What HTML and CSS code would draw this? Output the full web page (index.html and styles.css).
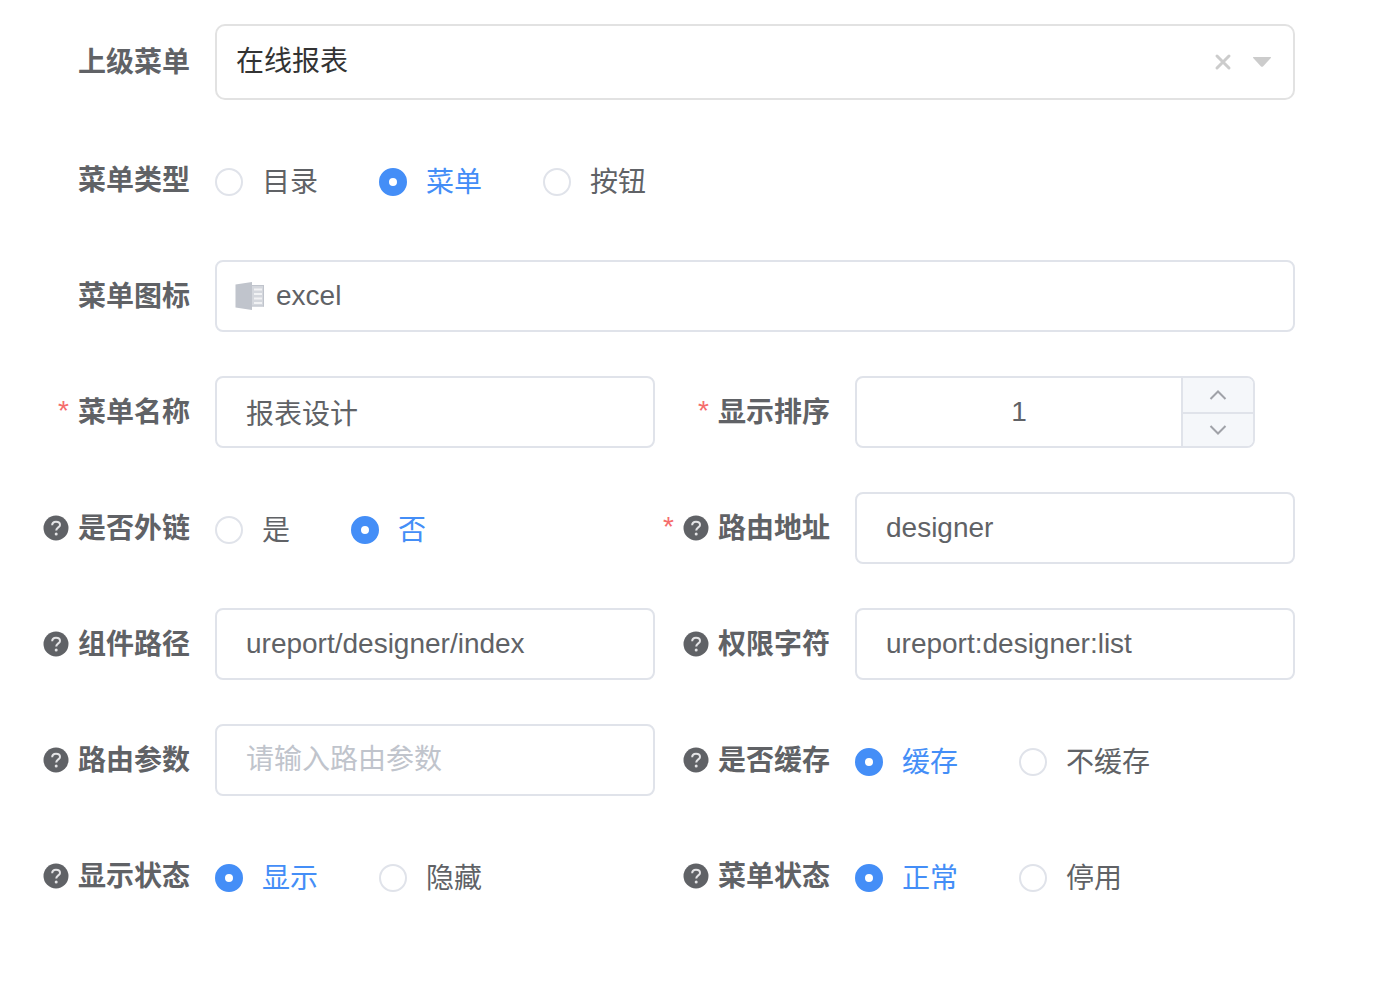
FILE: index.html
```html
<!DOCTYPE html>
<html lang="zh-CN">
<head>
<meta charset="utf-8">
<meta name="viewport" content="width=device-width, initial-scale=1">
<title>菜单设置</title>
<link rel="stylesheet" href="styles.css">
</head>
<body>
<svg class="sprite" aria-hidden="true">
  <symbol id="help" viewBox="0 0 26 26">
    <circle cx="13" cy="13" r="12.5" fill="currentColor"/>
    <path d="M9.2 10.2C9.2 7.8 10.8 6.7 13 6.7S17 7.9 17 9.9C17 12.4 13.2 12.5 13.2 15.6" fill="none" stroke="#e4e4e6" stroke-width="2"/>
    <circle cx="13.2" cy="19" r="1.5" fill="#e4e4e6"/>
  </symbol>
</svg>
<form class="form">
  <div class="item item-wide">
    <label class="label" for="parent">上级菜单</label>
    <div class="field select">
      <select class="select-input" id="parent"><option>在线报表</option></select>
      <div class="select-tools">
        <button class="clear" type="button" aria-label="清除">
          <svg width="18" height="18" viewBox="0 0 18 18"><path d="M3 3L15 15M15 3L3 15" stroke="#ccc" stroke-width="3" stroke-linecap="round"/></svg>
        </button>
        <svg width="20" height="12" viewBox="0 0 20 12" aria-hidden="true"><path d="M1.5 1H18.5Q19.5 1 18.8 2L11 10.4Q10 11.3 9 10.4L1.2 2Q.5 1 1.5 1Z" fill="#ccc"/></svg>
      </div>
    </div>
  </div>

  <div class="item item-wide">
    <span class="label" id="type-label">菜单类型</span>
    <div class="radios" role="radiogroup" aria-labelledby="type-label">
      <label class="radio"><input type="radio" name="type"><span>目录</span></label>
      <label class="radio"><input type="radio" name="type" checked><span>菜单</span></label>
      <label class="radio"><input type="radio" name="type"><span>按钮</span></label>
    </div>
  </div>

  <div class="item item-wide">
    <label class="label" for="icon">菜单图标</label>
    <div class="field field-icon">
      <svg width="30" height="30" viewBox="0 0 30 30" aria-hidden="true">
        <path d="M.5 3.5L17 1V29L.5 26.5Z" fill="#c0c4cc"/>
        <path d="M17 4H29V25.5H17Z" fill="#d4d7dd"/>
        <path d="M28.5 4V25.5M17 4.5H29M17 25H29" stroke="#c0c4cc" stroke-width="1"/>
        <path d="M19 8.5H27M19 13H27M19 17.5H27M19 22H27" stroke="#f1f2f4" stroke-width="2"/>
      </svg>
      <input class="input" id="icon" type="text" value="excel" readonly>
    </div>
  </div>

  <div class="item">
    <label class="label" for="name"><span class="required">*</span>菜单名称</label>
    <div class="field"><input class="input" id="name" type="text" value="报表设计"></div>
  </div>
  <div class="item">
    <label class="label" for="order"><span class="required">*</span>显示排序</label>
    <div class="field stepper">
      <input class="input stepper-input" id="order" type="text" inputmode="numeric" value="1">
      <div class="stepper-buttons">
        <button type="button" aria-label="增加"><svg width="18" height="12" viewBox="0 0 18 12"><path d="M1.5 10L9 2.5L16.5 10" fill="none" stroke="#a0a2a8" stroke-width="2"/></svg></button>
        <button type="button" aria-label="减少"><svg width="18" height="12" viewBox="0 0 18 12"><path d="M1.5 2L9 9.5L16.5 2" fill="none" stroke="#a0a2a8" stroke-width="2"/></svg></button>
      </div>
    </div>
  </div>

  <div class="item">
    <span class="label" id="link-label"><svg class="help"><use href="#help"/></svg>是否外链</span>
    <div class="radios" role="radiogroup" aria-labelledby="link-label">
      <label class="radio"><input type="radio" name="link"><span>是</span></label>
      <label class="radio"><input type="radio" name="link" checked><span>否</span></label>
    </div>
  </div>
  <div class="item">
    <label class="label" for="path"><span class="required">*</span><svg class="help"><use href="#help"/></svg>路由地址</label>
    <div class="field"><input class="input" id="path" type="text" value="designer"></div>
  </div>

  <div class="item">
    <label class="label" for="component"><svg class="help"><use href="#help"/></svg>组件路径</label>
    <div class="field"><input class="input" id="component" type="text" value="ureport/designer/index"></div>
  </div>
  <div class="item">
    <label class="label" for="perms"><svg class="help"><use href="#help"/></svg>权限字符</label>
    <div class="field"><input class="input" id="perms" type="text" value="ureport:designer:list"></div>
  </div>

  <div class="item">
    <label class="label" for="query"><svg class="help"><use href="#help"/></svg>路由参数</label>
    <div class="field"><input class="input" id="query" type="text" placeholder="请输入路由参数"></div>
  </div>
  <div class="item">
    <span class="label" id="cache-label"><svg class="help"><use href="#help"/></svg>是否缓存</span>
    <div class="radios" role="radiogroup" aria-labelledby="cache-label">
      <label class="radio"><input type="radio" name="cache" checked><span>缓存</span></label>
      <label class="radio"><input type="radio" name="cache"><span>不缓存</span></label>
    </div>
  </div>

  <div class="item">
    <span class="label" id="visible-label"><svg class="help"><use href="#help"/></svg>显示状态</span>
    <div class="radios" role="radiogroup" aria-labelledby="visible-label">
      <label class="radio"><input type="radio" name="visible" checked><span>显示</span></label>
      <label class="radio"><input type="radio" name="visible"><span>隐藏</span></label>
    </div>
  </div>
  <div class="item">
    <span class="label" id="status-label"><svg class="help"><use href="#help"/></svg>菜单状态</span>
    <div class="radios" role="radiogroup" aria-labelledby="status-label">
      <label class="radio"><input type="radio" name="status" checked><span>正常</span></label>
      <label class="radio"><input type="radio" name="status"><span>停用</span></label>
    </div>
  </div>
</form>
</body>
</html>
```
FILE: styles.css
```css
* {
  box-sizing: border-box;
}

body {
  margin: 0;
  background: #fff;
  color: #606266;
  font: 28px/40px "Liberation Sans", "Noto Sans CJK SC", sans-serif;
}

.sprite {
  display: none;
}

.form {
  display: grid;
  grid-template-columns: repeat(2, minmax(0, 1fr));
  row-gap: 44px;
  padding: 24px 81px 24px 15px;
}

.item {
  display: grid;
  grid-template-columns: 200px minmax(0, 1fr);
  align-items: center;
  min-height: 72px;
}

.item-wide {
  grid-column: 1 / -1;
}

.label {
  display: flex;
  align-items: center;
  justify-content: flex-end;
  gap: 9px;
  padding: 2px 25px 0 0;
  font-weight: 700;
  white-space: nowrap;
}

.required {
  padding-bottom: 4px;
  color: #f56c6c;
  font-weight: 400;
}

.help {
  width: 26px;
  height: 26px;
  margin-bottom: 2px;
}

.field {
  display: flex;
  align-items: center;
  height: 72px;
  border: 2px solid #e0e3ea;
  border-radius: 8px;
  overflow: hidden;
}

.input,
.select-input {
  flex: 1;
  min-width: 0;
  height: 100%;
  border: 0;
  outline: 0;
  padding: 0 29px;
  background: none;
  color: inherit;
  font: inherit;
}

.input::placeholder {
  color: #c0c4cc;
  opacity: 1;
}

.select {
  height: 76px;
  border-color: #e2e2e2;
  border-radius: 10px;
  padding-right: 21px;
}

.select-input {
  appearance: none;
  padding: 0 19px;
  color: #333;
}

.select-tools {
  display: flex;
  align-items: center;
  gap: 20px;
}

.clear {
  display: flex;
  padding: 0;
  border: 0;
  background: none;
}

.field-icon {
  padding-left: 18px;
}

.field-icon .input {
  padding-left: 11px;
}

.stepper {
  width: 400px;
  max-width: 100%;
}

.stepper-input {
  text-align: center;
}

.stepper-buttons {
  display: grid;
  grid-template-rows: 36px 1fr;
  width: 72px;
  height: 100%;
  border-left: 2px solid #e0e3ea;
}

.stepper-buttons button {
  display: flex;
  align-items: center;
  justify-content: center;
  padding: 0;
  border: 0;
  background: #f5f7fa;
}

.stepper-buttons button:first-child {
  border-bottom: 2px solid #e0e3ea;
}

.radios {
  display: flex;
  gap: 61px;
  padding-top: 4px;
}

.radio {
  display: flex;
  align-items: center;
  gap: 19px;
  white-space: nowrap;
}

.radio span {
  padding-top: 2px;
}

.radio input {
  appearance: none;
  width: 28px;
  height: 28px;
  margin: 0;
  border: 2px solid #e0e3ea;
  border-radius: 50%;
  background: #fff;
}

.radio input:checked {
  border: 10px solid #448ef7;
}

.radio input:checked + span {
  color: #448ef7;
}
```
